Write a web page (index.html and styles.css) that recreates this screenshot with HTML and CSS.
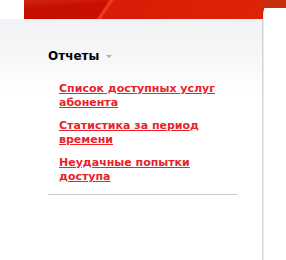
FILE: index.html
```html
<!DOCTYPE html>
<html>
<head>
    <title>Отчеты</title>
    <link rel="stylesheet" href="styles.css">
</head>
<body>
<div class="page">
    <div class="main">
        <div class="banner"></div>
        <div class="panel">
            <h2 class="menu-title">Отчеты <span class="caret"></span></h2>
            <ul class="menu-list">
                <li><a href="#">Список доступных услуг абонента</a></li>
                <li><a href="#">Статистика за период времени</a></li>
                <li><a href="#">Неудачные попытки доступа</a></li>
            </ul>
            <div class="divider"></div>
        </div>
    </div>
    <div class="side">
        <div class="side-top"></div>
        <div class="side-box"></div>
    </div>
</div>
</body>
</html>
```

FILE: styles.css
```css
body {
    margin: 0;
    font-family: "DejaVu Sans", Verdana, sans-serif;
    background: #fff;
}

.page {
    display: flex;
    height: 260px;
}

.main {
    width: 264px;
    display: flex;
    flex-direction: column;
}

/* red header strip with the diagonal highlight */
.banner {
    height: 19px;
    margin-left: 24px;
    background:
        linear-gradient(176deg, rgba(255, 110, 70, 0.25) 0, transparent 25%),
        linear-gradient(124deg, #c40e00 0, #c81000 33.5%, #ee4424 34.5%, #d81c06 36%, #dc2408 100%);
}

.panel {
    flex: 1;
    padding: 29px 0 0 48px;
    border-right: 2px solid #d6d6d6;
    background: linear-gradient(180deg, #f1f2f5 0, #f7f7f9 40px, #fff 70px);
}

.menu-title {
    margin: 0;
    font-size: 12px;
    line-height: 16px;
    color: #000;
}

.caret {
    display: inline-block;
    width: 0;
    height: 0;
    margin-left: 2px;
    vertical-align: middle;
    border-left: 3px solid transparent;
    border-right: 3px solid transparent;
    border-top: 3px solid #b0b0b0;
}

.menu-list {
    list-style: none;
    margin: 18px 0 0 0;
    padding: 0 0 0 11px;
    width: 170px;
}

.menu-list li {
    margin-bottom: 9px;
    font-size: 11px;
    line-height: 14px;
    font-weight: bold;
}

.menu-list a {
    color: #e8232b;
    text-decoration: underline;
}

.divider {
    width: 189px;
    height: 1px;
    margin-top: 10px;
    background: #c8c8c8;
}

.side {
    flex: 1;
    display: flex;
    flex-direction: column;
}

.side-top {
    height: 8px;
    background: #c4300a;
}

.side-box {
    flex: 1;
    background: #fff;
    border-top-left-radius: 5px;
    box-shadow: -1px 0 0 #e8e8e8;
}
```
